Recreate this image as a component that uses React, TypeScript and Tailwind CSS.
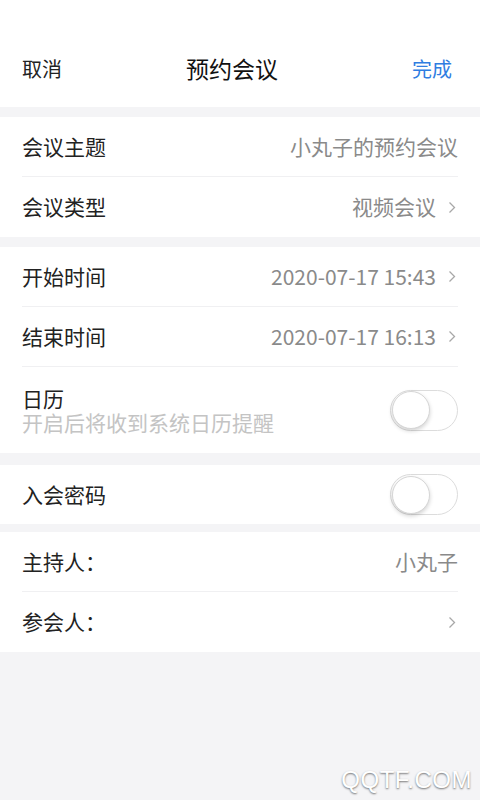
const font = { fontFamily: '"Noto Sans CJK SC", "Noto Sans", sans-serif' };

function Chevron() {
  return (
    <svg width="8" height="13" viewBox="0 0 8 13" className="ml-[12px] mr-[2px] shrink-0">
      <path d="M1.5 1.5 L6.5 6.5 L1.5 11.5" fill="none" stroke="#a8a8a8" strokeWidth="1.3" />
    </svg>
  );
}

function Toggle() {
  return (
    <div className="w-[68px] h-[41px] rounded-full border border-[#dcdcdc] bg-white flex items-center px-[1px] shrink-0">
      <div className="w-[38px] h-[38px] rounded-full bg-white border border-[#d6d6d6] shadow-[0_2px_4px_rgba(0,0,0,0.18)]" />
    </div>
  );
}

function Row({ label, value, chevron, last }: { label: string; value?: string; chevron?: boolean; last?: boolean }) {
  return (
    <div className={`mx-[22px] h-[60px] flex items-center justify-between ${last ? "" : "border-b border-[#f0f0f2]"}`}>
      <span className="text-[21px] text-[#222]">{label}</span>
      <div className="flex items-center">
        {value && <span className="text-[21px] text-[#8a8a8a]">{value}</span>}
        {chevron && <Chevron />}
      </div>
    </div>
  );
}

export default function App() {
  return (
    <div className="w-[480px] h-[800px] bg-[#f4f4f6] relative overflow-hidden" style={font}>
      <header className="bg-white h-[107px] pt-[30px] pl-[22px] pr-[28px] flex items-center justify-between">
        <span className="text-[20px] text-[#222]">取消</span>
        <span className="text-[23px] text-[#111] mr-[10px]">预约会议</span>
        <span className="text-[20px] text-[#2f7de1]">完成</span>
      </header>

      <section className="bg-white mt-[10px]">
        <Row label="会议主题" value="小丸子的预约会议" />
        <Row label="会议类型" value="视频会议" chevron last />
      </section>

      <section className="bg-white mt-[10px]">
        <Row label="开始时间" value="2020-07-17 15:43" chevron />
        <Row label="结束时间" value="2020-07-17 16:13" chevron />
        <div className="mx-[22px] h-[86px] flex items-center justify-between">
          <div className="flex flex-col leading-[24px]">
            <span className="text-[21px] text-[#222]">日历</span>
            <span className="text-[21px] text-[#c4c4c4]">开启后将收到系统日历提醒</span>
          </div>
          <Toggle />
        </div>
      </section>

      <section className="bg-white mt-[12px]">
        <div className="mx-[22px] h-[59px] flex items-center justify-between">
          <span className="text-[21px] text-[#222]">入会密码</span>
          <Toggle />
        </div>
      </section>

      <section className="bg-white mt-[8px]">
        <Row label="主持人：" value="小丸子" />
        <Row label="参会人：" chevron last />
      </section>

      <div className="absolute right-[8px] bottom-[2px] text-[24px] text-white tracking-[0.5px] [text-shadow:0_1px_2px_rgba(0,0,0,0.55)]" style={{ fontFamily: '"Liberation Sans", sans-serif' }}>
        QQTF.COM
      </div>
    </div>
  );
}
